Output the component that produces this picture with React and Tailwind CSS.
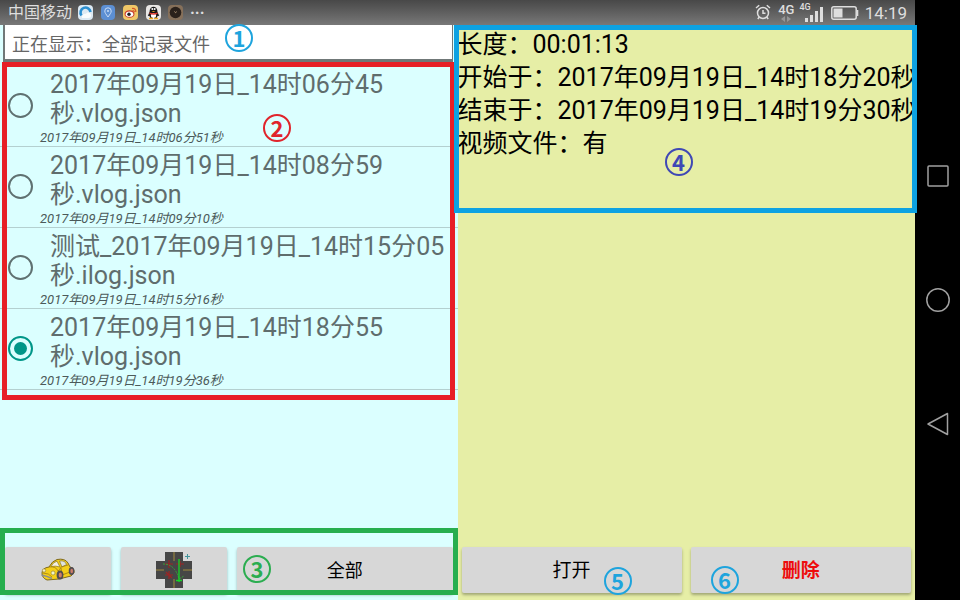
import React, { useState } from "react";

const records = [
  { title: "2017年09月19日_14时06分45秒.vlog.json", saved: "2017年09月19日_14时06分51秒" },
  { title: "2017年09月19日_14时08分59秒.vlog.json", saved: "2017年09月19日_14时09分10秒" },
  { title: "测试_2017年09月19日_14时15分05秒.ilog.json", saved: "2017年09月19日_14时15分16秒" },
  { title: "2017年09月19日_14时18分55秒.vlog.json", saved: "2017年09月19日_14时19分36秒" },
];

function Marker({ n, className }) {
  return (
    <span
      className={`pointer-events-none absolute z-20 flex size-7 items-center justify-center rounded-full border-2 pb-[2px] font-['Noto_Sans_CJK_SC',sans-serif] text-[22px] leading-none font-bold ${className}`}
    >
      {n}
    </span>
  );
}

function AppIcons() {
  return (
    <svg width="106" height="17" viewBox="0 0 106 17" aria-hidden="true">
      {/* browser */}
      <rect x="0" y="1" width="15" height="15" rx="4" fill="#dce9f3" />
      <path d="M3.500 11.500A5 5 0 1 1 12.500 8" fill="none" stroke="#2b8fd0" strokeWidth="2.600" />
      <path d="M4 14C3.500 11 6 9 8 10c1-2.500 5-1.500 5 1q.5 3-3 3z" fill="#fafcfd" />
      {/* map */}
      <rect x="23" y="1" width="14" height="15" rx="4" fill="#5c8fd3" />
      <path d="M30 13c-2-3-3.200-4-3.200-6a3.200 3.200 0 0 1 6.400 0c0 2-1.200 3-3.200 6z" fill="none" stroke="#c9dcf5" />
      <circle cx="30" cy="7" r="1" fill="#c9dcf5" />
      {/* weibo */}
      <rect x="45" y="1" width="15" height="15" rx="4" fill="#efc767" />
      <ellipse cx="51.500" cy="10" rx="5" ry="3.800" fill="#c93a2b" />
      <ellipse cx="51.500" cy="10.200" rx="3.800" ry="2.600" fill="#fff" />
      <circle cx="51" cy="10.300" r="1.700" fill="#222" />
      <path d="M54 4.500q4-.5 3.800 3.500M54.500 6.500q1.800 0 1.700 1.700" fill="none" stroke="#d65325" strokeWidth="1.200" />
      {/* qq */}
      <rect x="68" y="1" width="15" height="15" rx="4" fill="#e9e7e5" />
      <path d="M71.500 8c0-7 8-7 8 0l1.800 4-1.600-.3-1.200 2.300h-6l-1.200-2.300-1.500.3z" fill="#161616" />
      <ellipse cx="75.500" cy="11.500" rx="2.600" ry="2.500" fill="#fff" />
      <path d="M71.500 8.500q4 1.500 8 0v1.600q-4 1.500-8 0z" fill="#d9322b" />
      <circle cx="74.300" cy="5" r="1" fill="#fff" />
      <circle cx="76.700" cy="5" r="1" fill="#fff" />
      <path d="M73.500 7h4l-2 1z" fill="#eda621" />
      <path d="M71 14.500h4M76 14.500h4" stroke="#eda621" strokeWidth="1.600" />
      {/* recorder */}
      <rect x="90" y="1" width="15" height="15" rx="4" fill="#86705a" />
      <circle cx="97.500" cy="8.500" r="5.800" fill="#2a211b" />
      <path d="m96.500 7.500 1 1.200 1.200-1" fill="none" stroke="#b59a79" />
    </svg>
  );
}

function Alarm() {
  return (
    <svg width="16" height="17" viewBox="0 0 16 17" fill="none" stroke="#dedede" strokeWidth="1.500" aria-hidden="true">
      <circle cx="8" cy="9" r="5.500" />
      <path d="M8 6v3.300h2.500M1 4l3.200-2.700M15 4l-3.200-2.700M4.300 13l-1.500 2M11.700 13l1.500 2" />
    </svg>
  );
}

function Signal() {
  return (
    <svg width="18" height="16" viewBox="0 0 18 16" fill="#dedede" aria-hidden="true">
      <rect x="0" y="12" width="3" height="4" />
      <rect x="5" y="9" width="3" height="7" />
      <rect x="10" y="5" width="3" height="11" />
      <rect x="15" y="1" width="3" height="15" />
    </svg>
  );
}

function Battery() {
  return (
    <svg width="28" height="14" viewBox="0 0 28 14" aria-hidden="true">
      <rect x=".8" y=".8" width="24.400" height="12.400" rx="2" fill="none" stroke="#dedede" strokeWidth="1.500" />
      <rect x="2.500" y="2.500" width="9" height="9" fill="#dedede" />
      <path d="M26.500 4v6" stroke="#dedede" strokeWidth="1.600" />
    </svg>
  );
}

function Car() {
  return (
    <svg width="36" height="24" viewBox="0 0 36 24" aria-hidden="true">
      <path
        d="M2 15Q2 10 9 9Q12 3 17 1.500Q25 0 28 5L30 9Q35 10 34 15L31 18 19 21 7 22Q2 20 2 15Z"
        fill="#f4cf18"
        stroke="#806a1c"
      />
      <path d="M11 8.500Q13 4 17 3.200L20 9Q16 7.500 11 8.500Z" fill="#f2eee2" stroke="#8d7827" strokeWidth=".7" />
      <path d="M19.500 3Q25 2 26.500 6.500L22 9Z" fill="#dfe3dc" stroke="#8d7827" strokeWidth=".7" />
      <path d="M9 9Q16 8 18 13Q20 12 21 9L28 7M21 10L22 17L30 14M3 15Q9 15 12 19" fill="none" stroke="#a07c10" strokeWidth=".8" />
      <path d="M1.500 17Q7 18 12 20.500" fill="none" stroke="#8a8d90" strokeWidth="1.500" />
      <circle cx="4" cy="12.500" r="1.700" fill="#f5efc1" stroke="#8f7b28" strokeWidth=".6" />
      <circle cx="13" cy="15" r="2" fill="#eff4ca" stroke="#8f7b28" strokeWidth=".6" />
      <ellipse cx="20" cy="17" rx="3.400" ry="4.500" fill="#514d52" />
      <ellipse cx="20.300" cy="17" rx="1.600" ry="2.500" fill="#cf7d69" />
      <ellipse cx="31.500" cy="13" rx="2.800" ry="4" fill="#514d52" />
      <ellipse cx="31.700" cy="13" rx="1.300" ry="2.200" fill="#cf7d69" />
    </svg>
  );
}

function Crossing() {
  return (
    <svg width="36" height="36" viewBox="0 0 36 36" aria-hidden="true">
      <path d="M9 0H27V9H36V27H27V36H9V27H0V9H9Z" fill="#464646" />
      <path d="M18 0V9M18 27V36M0 18H8M27 18H36" stroke="#a18b3d" />
      <path d="M13 8V16M9 12H17M24 9V15M20 12H28M13 19V27M9 23H17M10 20L16 26" stroke="#9d2424" strokeWidth="1.200" />
      <path d="M7 12Q19 12 23 27L28 24" fill="none" stroke="#35a437" strokeDasharray="2 1" />
      <path d="M23 7V30M20 28.500H26" stroke="#15d627" strokeWidth="1.300" />
      <path d="M31.500 2V7M29 4.500H34" stroke="#43959c" />
    </svg>
  );
}

const buttonClass =
  "flex h-[46px] items-center justify-center rounded-xs bg-[#d7d7d7] text-black shadow-[0_2px_3px_rgba(0,0,0,0.3)]";

function StatusBar() {
  return (
    <header className="flex h-[25px] shrink-0 items-center justify-between bg-linear-to-b from-[#484848] to-[#787878] pr-2 pl-2 text-[#dedede]">
      <div className="flex items-center gap-[6px]">
        <span className="pt-px text-[16px] leading-6">中国移动</span>
        <AppIcons />
        <span className="text-[16px] leading-6 font-bold">···</span>
      </div>
      <div className="flex items-center">
        <Alarm />
        <div className="ml-[7px] flex flex-col items-center">
          <span className="text-[13px] leading-3 font-medium">4G</span>
          <svg width="10" height="6" viewBox="0 0 10 6" fill="#969696" aria-hidden="true">
            <path d="M4 0V6L0 3ZM6 0V6L10 3Z" />
          </svg>
        </div>
        <div className="ml-[5px] flex h-[19px] items-start">
          <span className="text-[9px] leading-[8px] font-medium">4G</span>
          <span className="-ml-[6px] self-end">
            <Signal />
          </span>
        </div>
        <span className="ml-2">
          <Battery />
        </span>
        <span className="ml-[6px] text-[17px] leading-6">14:19</span>
      </div>
    </header>
  );
}

function RecordRow({ record, checked, onSelect }) {
  return (
    <li className="border-b border-[#b4d0d0]">
      <label className="flex items-start pt-1 pl-2">
        <input
          type="radio"
          name="record"
          checked={checked}
          onChange={onSelect}
          className="mt-[23px] size-[25px] shrink-0 appearance-none rounded-full border-2 border-[#5f7171] checked:border-[#009688] checked:bg-[#009688] checked:bg-clip-content checked:p-1"
        />
        <span className="ml-[7px] block min-w-0 flex-1">
          <span className="block pr-2 pl-[10px] text-[25px] leading-[29px] text-[#5f6d6d]">{record.title}</span>
          <span className="block pt-px text-[13px] leading-[17px] text-[#4c5a5a] italic">{record.saved}</span>
        </span>
      </label>
    </li>
  );
}

export default function App() {
  const [selected, setSelected] = useState(3);
  return (
    <div className="flex h-screen overflow-hidden bg-black font-[Roboto,'Noto_Sans_CJK_SC',sans-serif]">
      <div className="flex min-w-0 flex-1 flex-col">
        <StatusBar />
        <main className="flex min-h-0 flex-1">
          <section className="relative flex min-w-0 flex-1 flex-col bg-[#dbffff]">
            <div className="mr-[5px] ml-[3px] border-r border-b-3 border-l-2 border-[#707878] bg-white pl-[7px]">
              <h1 className="pt-2 pb-[2px] text-[18px] leading-6 whitespace-nowrap text-[#666666]">正在显示：全部记录文件</h1>
            </div>
            <Marker n={1} className="-top-px left-[225px] border-[#1ea4dd] text-[#1ea4dd]" />
            <div className="relative mt-1">
              <ul>
                {records.map((record, i) => (
                  <RecordRow key={record.saved} record={record} checked={selected === i} onSelect={() => setSelected(i)} />
                ))}
              </ul>
              <div className="pointer-events-none absolute -top-1 right-[3px] -bottom-[10px] left-[2px] border-5 border-[#e71f26]" />
              <Marker n={2} className="top-12 left-[263px] border-[#e0242b] text-[#e0242b]" />
            </div>
            <footer className="relative mt-auto flex gap-[10px] px-[5px] pt-[19px] pb-[7px]">
              <button type="button" aria-label="车辆记录" className={`${buttonClass} w-[106px]`}>
                <Car />
              </button>
              <button type="button" aria-label="路口记录" className={`${buttonClass} w-[106px]`}>
                <Crossing />
              </button>
              <button type="button" className={`${buttonClass} flex-1 text-[18px]`}>
                全部
              </button>
              <div className="pointer-events-none absolute inset-x-0 top-0 bottom-[5px] border-5 border-[#27ae4e]" />
              <Marker n={3} className="top-[27px] left-[243px] border-[#2bad50] text-[#2bad50]" />
            </footer>
          </section>

          <section className="relative flex min-w-0 flex-1 flex-col bg-[#e6eea6]">
            <div className="relative">
              <div className="h-[188px] overflow-hidden pt-[3px] text-[25px] leading-[33px] whitespace-nowrap text-black">
                <p>长度：00:01:13</p>
                <p>开始于：2017年09月19日_14时18分20秒</p>
                <p>结束于：2017年09月19日_14时19分30秒</p>
                <p>视频文件：有</p>
              </div>
              <div className="pointer-events-none absolute inset-y-0 -right-[2px] -left-1 z-10 border-5 border-[#0da2e2]" />
              <Marker n={4} className="top-[123px] left-[207px] border-[#3f48b5] text-[#3f48b5]" />
            </div>
            <footer className="relative mt-auto flex gap-[9px] px-1 pt-[19px] pb-[7px]">
              <button type="button" className={`${buttonClass} flex-1 pt-[3px] text-[19px]`}>
                打开
              </button>
              <button type="button" className={`${buttonClass} flex-1 pt-[3px] text-[19px]`}>
                <span className="font-bold text-[#ee0c0c]">删除</span>
              </button>
              <Marker n={5} className="top-[39px] left-[146px] border-[#1ea4dd] text-[#1ea4dd]" />
              <Marker n={6} className="top-[38px] left-[253px] border-[#1ea4dd] text-[#1ea4dd]" />
            </footer>
          </section>
        </main>
      </div>

      <nav aria-label="系统导航" className="flex w-[45px] shrink-0 flex-col items-center justify-center gap-[100px]">
        <button type="button" aria-label="最近任务">
          <svg width="24" height="24" viewBox="0 0 24 24" fill="none" stroke="#a0a0a0" strokeWidth="1.500">
            <rect x="2" y="2" width="20" height="20" rx="1" />
          </svg>
        </button>
        <button type="button" aria-label="主页">
          <svg width="24" height="24" viewBox="0 0 24 24" fill="none" stroke="#a0a0a0" strokeWidth="1.500">
            <circle cx="12" cy="12" r="11.200" />
          </svg>
        </button>
        <button type="button" aria-label="返回">
          <svg width="24" height="24" viewBox="0 0 24 24" fill="none" stroke="#a0a0a0" strokeWidth="1.500" strokeLinejoin="round">
            <path d="M21.500 1.500V22.500L2 12Z" />
          </svg>
        </button>
      </nav>
    </div>
  );
}
